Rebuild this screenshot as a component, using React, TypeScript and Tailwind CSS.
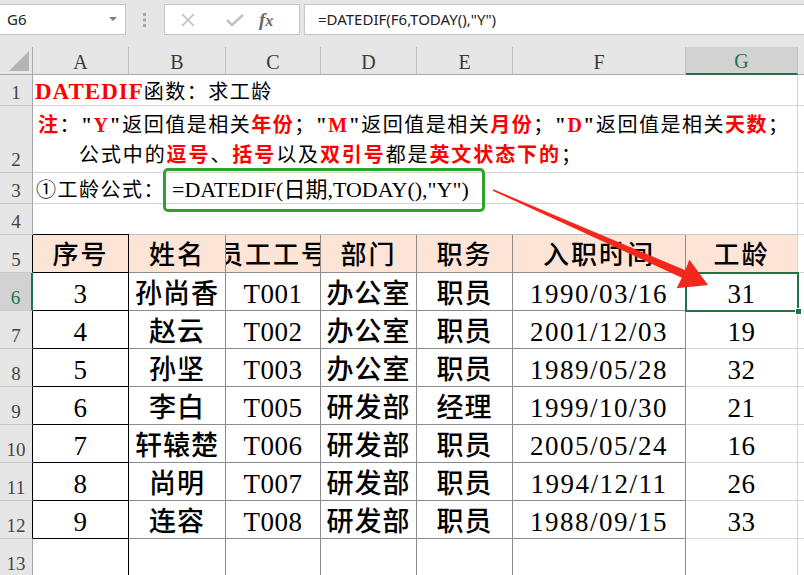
import React from "react";

const SERIF = "font-['Liberation_Serif','Noto_Sans_CJK_SC',serif]";
const RED = "text-[#ff0000] font-bold";

const cols = [
  { key: "A", w: "w-[96px]" },
  { key: "B", w: "w-[97px]" },
  { key: "C", w: "w-[95px]" },
  { key: "D", w: "w-[96px]" },
  { key: "E", w: "w-[96px]" },
  { key: "F", w: "w-[173px]" },
  { key: "G", w: "w-[112px]" },
];

const header = ["序号", "姓名", "员工工号", "部门", "职务", "入职时间", "工龄"];
const data = [
  ["3", "孙尚香", "T001", "办公室", "职员", "1990/03/16", "31"],
  ["4", "赵云", "T002", "办公室", "职员", "2001/12/03", "19"],
  ["5", "孙坚", "T003", "办公室", "职员", "1989/05/28", "32"],
  ["6", "李白", "T005", "研发部", "经理", "1999/10/30", "21"],
  ["7", "轩辕楚", "T006", "研发部", "职员", "2005/05/24", "16"],
  ["8", "尚明", "T007", "研发部", "职员", "1994/12/11", "26"],
  ["9", "连容", "T008", "研发部", "职员", "1988/09/15", "33"],
];

function RowHead({ n, dark, active }: { n: number; dark?: boolean; active?: boolean }) {
  return (
    <div
      className={
        "w-[33px] shrink-0 flex items-end justify-center pb-[1px] text-[19px] leading-[22px] border-b border-[#c8c8c8] " +
        SERIF +
        " " +
        (active
          ? "bg-[#d2d2d2] text-[#217346] border-r-2 border-r-[#217346]"
          : dark
          ? "bg-[#e6e6e6] text-[#444444] border-r border-r-black"
          : "bg-[#e6e6e6] text-[#444444] border-r border-r-[#a6a6a6]")
      }
    >
      {n}
    </div>
  );
}

function borderFor(i: number) {
  if (i === 0) return "border-r border-b border-black";
  if (i === 6) return "border-r border-b border-[#d4d4d4]";
  return "border-r border-b border-[#8c8c8c]";
}

function textClass(i: number) {
  if (i === 1 || i === 3 || i === 4) return "font-medium tracking-[1px]";
  if (i === 5) return "tracking-[1.5px]";
  return "tracking-[0.5px]";
}

export default function App() {
  return (
    <div className={"relative w-[804px] h-[575px] overflow-hidden bg-white " + SERIF}>
      {/* formula bar */}
      <div className="h-[47px] bg-[#e6e6e6] pt-[4px] flex items-start">
        <div className="w-[126px] h-[31px] shrink-0 bg-white border border-[#c6c6c6] border-l-0 flex items-center justify-between pl-[7px] pr-[8px]">
          <span className="font-['Noto_Sans',sans-serif] text-[15px] text-[#222222]">G6</span>
          <svg width="8" height="5" viewBox="0 0 8 5">
            <path d="M0 0H8L4 4Z" fill="#7a7a7a" />
          </svg>
        </div>
        <div className="w-[38px] h-[31px] shrink-0 flex items-center justify-center">
          <svg width="4" height="16" viewBox="0 0 4 16">
            <rect x="0" y="1" width="3" height="3" fill="#a8a8a8" />
            <rect x="0" y="6.5" width="3" height="3" fill="#a8a8a8" />
            <rect x="0" y="12" width="3" height="3" fill="#a8a8a8" />
          </svg>
        </div>
        <div className="w-[136px] h-[31px] shrink-0 bg-white border border-[#c6c6c6] flex items-center">
          <svg className="ml-[15px]" width="16" height="16" viewBox="0 0 16 16">
            <path d="M2 2L14 14M14 2L2 14" stroke="#bcbcbc" strokeWidth="1.6" />
          </svg>
          <svg className="ml-[29px]" width="20" height="16" viewBox="0 0 20 16">
            <path d="M2 8L7 13L18 3" stroke="#c2c2c2" strokeWidth="2.6" fill="none" />
          </svg>
          <span className="ml-[14px] font-['Liberation_Serif',serif] italic font-bold text-[19px] leading-none text-[#666666]">
            f<span className="text-[16px]">x</span>
          </span>
        </div>
        <div className="ml-[4px] flex-1 h-[31px] bg-white border border-[#c6c6c6] border-r-0 flex items-center pl-[13px] font-['Noto_Sans',sans-serif] text-[15px] text-[#222222]">
          =DATEDIF(F6,TODAY(),"Y")
        </div>
      </div>

      {/* column headers */}
      <div className="flex h-[28px]">
        <div className="w-[33px] shrink-0 bg-[#e6e6e6] border-r border-b border-[#ababab] flex items-end justify-end pr-[3px] pb-[3px]">
          <svg width="20" height="20" viewBox="0 0 20 20">
            <path d="M20 0V20H0Z" fill="#b4b4b4" />
          </svg>
        </div>
        {cols.map((c) => (
          <div
            key={c.key}
            className={
              c.w +
              " shrink-0 flex items-center justify-center text-[20px] pt-[2px] " +
              (c.key === "G"
                ? "bg-[#d2d2d2] text-[#217346] border-r border-r-[#c0c0c0] border-b-2 border-b-[#217346]"
                : "bg-[#e6e6e6] text-[#3a3a3a] border-r border-r-[#c0c0c0] border-b border-b-[#ababab]")
            }
          >
            {c.key}
          </div>
        ))}
        <div className="flex-1 bg-[#e6e6e6] border-b border-[#ababab]" />
      </div>

      {/* row 1 */}
      <div className="flex h-[31px]">
        <RowHead n={1} />
        <div className="w-[765px] shrink-0 border-r border-b border-[#d4d4d4] flex items-center pl-[2px] pt-[4px] text-[20px] tracking-[1.5px] text-black whitespace-nowrap">
          <span className="text-[#ff0000] font-bold text-[23px] tracking-[1px]">DATEDIF</span>
          <span>函数：求工龄</span>
        </div>
        <div className="flex-1 border-b border-[#d4d4d4]" />
      </div>

      {/* row 2 */}
      <div className="flex h-[67px]">
        <RowHead n={2} />
        <div className="w-[765px] shrink-0 border-r border-b border-[#d4d4d4] flex flex-col justify-center pt-[2px] text-[20px] leading-[30px] tracking-[1.5px] text-black whitespace-nowrap">
          <div className="pl-[5px]">
            <span className={RED}>注</span>：<b>"</b>
            <span className={RED}>Y</span>
            <b>"</b>返回值是相关<span className={RED}>年份</span>；<b>"</b>
            <span className={RED}>M</span>
            <b>"</b>返回值是相关<span className={RED}>月份</span>；<b>"</b>
            <span className={RED}>D</span>
            <b>"</b>返回值是相关<span className={RED}>天数</span>；
          </div>
          <div className="pl-[46px] tracking-[1.9px]">
            公式中的<span className={RED}>逗号</span>、<span className={RED}>括号</span>以及
            <span className={RED}>双引号</span>都是<span className={RED}>英文状态下的</span>；
          </div>
        </div>
        <div className="flex-1 border-b border-[#d4d4d4]" />
      </div>

      {/* row 3 */}
      <div className="flex h-[31px]">
        <RowHead n={3} />
        <div className="w-[765px] shrink-0 border-r border-b border-[#d4d4d4] flex items-center pl-[3px] pt-[3px] text-[20px] tracking-[1.5px] text-black whitespace-nowrap">
          <span>①工龄公式：</span>
          <span className="ml-[7px] text-[22px] tracking-normal">=DATEDIF(日期,TODAY(),"Y")</span>
        </div>
        <div className="flex-1 border-b border-[#d4d4d4]" />
      </div>

      {/* row 4 */}
      <div className="flex h-[31px]">
        <RowHead n={4} />
        {cols.map((c, i) => (
          <div
            key={c.key}
            className={
              c.w +
              " shrink-0 border-b " +
              (i === 0 ? "border-black" : i === 6 ? "border-[#c8c8c8] border-r border-r-[#d4d4d4]" : "border-[#c0c0c0]")
            }
          />
        ))}
        <div className="flex-1 border-b border-[#d4d4d4]" />
      </div>

      {/* row 5 header */}
      <div className="flex h-[38px]">
        <RowHead n={5} dark />
        {header.map((t, i) => (
          <div
            key={i}
            className={
              cols[i].w +
              " shrink-0 bg-[#fce4d6] flex items-center justify-center overflow-hidden whitespace-nowrap " +
              borderFor(i)
            }
          >
            <span className="pt-[5px] text-[26px] leading-none font-medium tracking-[2px] text-black">{t}</span>
          </div>
        ))}
        <div className="flex-1 border-b border-[#d4d4d4]" />
      </div>

      {/* data rows */}
      {data.map((r, ri) => (
        <div key={ri} className="flex h-[38px]">
          <RowHead n={6 + ri} dark active={ri === 0} />
          {r.map((t, i) => (
            <div
              key={i}
              className={
                cols[i].w +
                " shrink-0 flex items-center justify-center overflow-hidden whitespace-nowrap " +
                borderFor(i)
              }
            >
              <span className={"pt-[5px] text-[27px] leading-none text-black " + textClass(i)}>{t}</span>
            </div>
          ))}
          <div className="flex-1 border-b border-[#d4d4d4]" />
        </div>
      ))}

      {/* row 13 */}
      <div className="flex h-[38px]">
        <RowHead n={13} />
        {cols.map((c, i) => (
          <div
            key={c.key}
            className={
              c.w +
              " shrink-0 border-b border-b-[#d4d4d4] border-r " +
              (i === 0 ? "border-r-black" : i === 6 ? "border-r-[#d4d4d4]" : "border-r-[#8c8c8c]")
            }
          />
        ))}
        <div className="flex-1 border-b border-[#d4d4d4]" />
      </div>

      {/* green formula box */}
      <div className="absolute left-[163px] top-[168px] w-[322px] h-[44px] border-[3px] border-[#2ea12e] rounded-[5px] pointer-events-none" />

      {/* selected cell G6 */}
      <div className="absolute left-[685px] top-[272px] w-[114px] h-[40px] border-2 border-[#217346] pointer-events-none" />
      <div className="absolute left-[795px] top-[308px] w-[7px] h-[7px] bg-[#217346] border border-white pointer-events-none" />

      {/* red arrow */}
      <svg className="absolute left-0 top-0 pointer-events-none" width="804" height="575" viewBox="0 0 804 575">
        <polygon
          points="492.7,190.7 493.3,189.3 685.2,270.3 689.4,259.7 708,285 676.6,288.3 681.8,277.7"
          fill="#f4271c"
        />
      </svg>
    </div>
  );
}
